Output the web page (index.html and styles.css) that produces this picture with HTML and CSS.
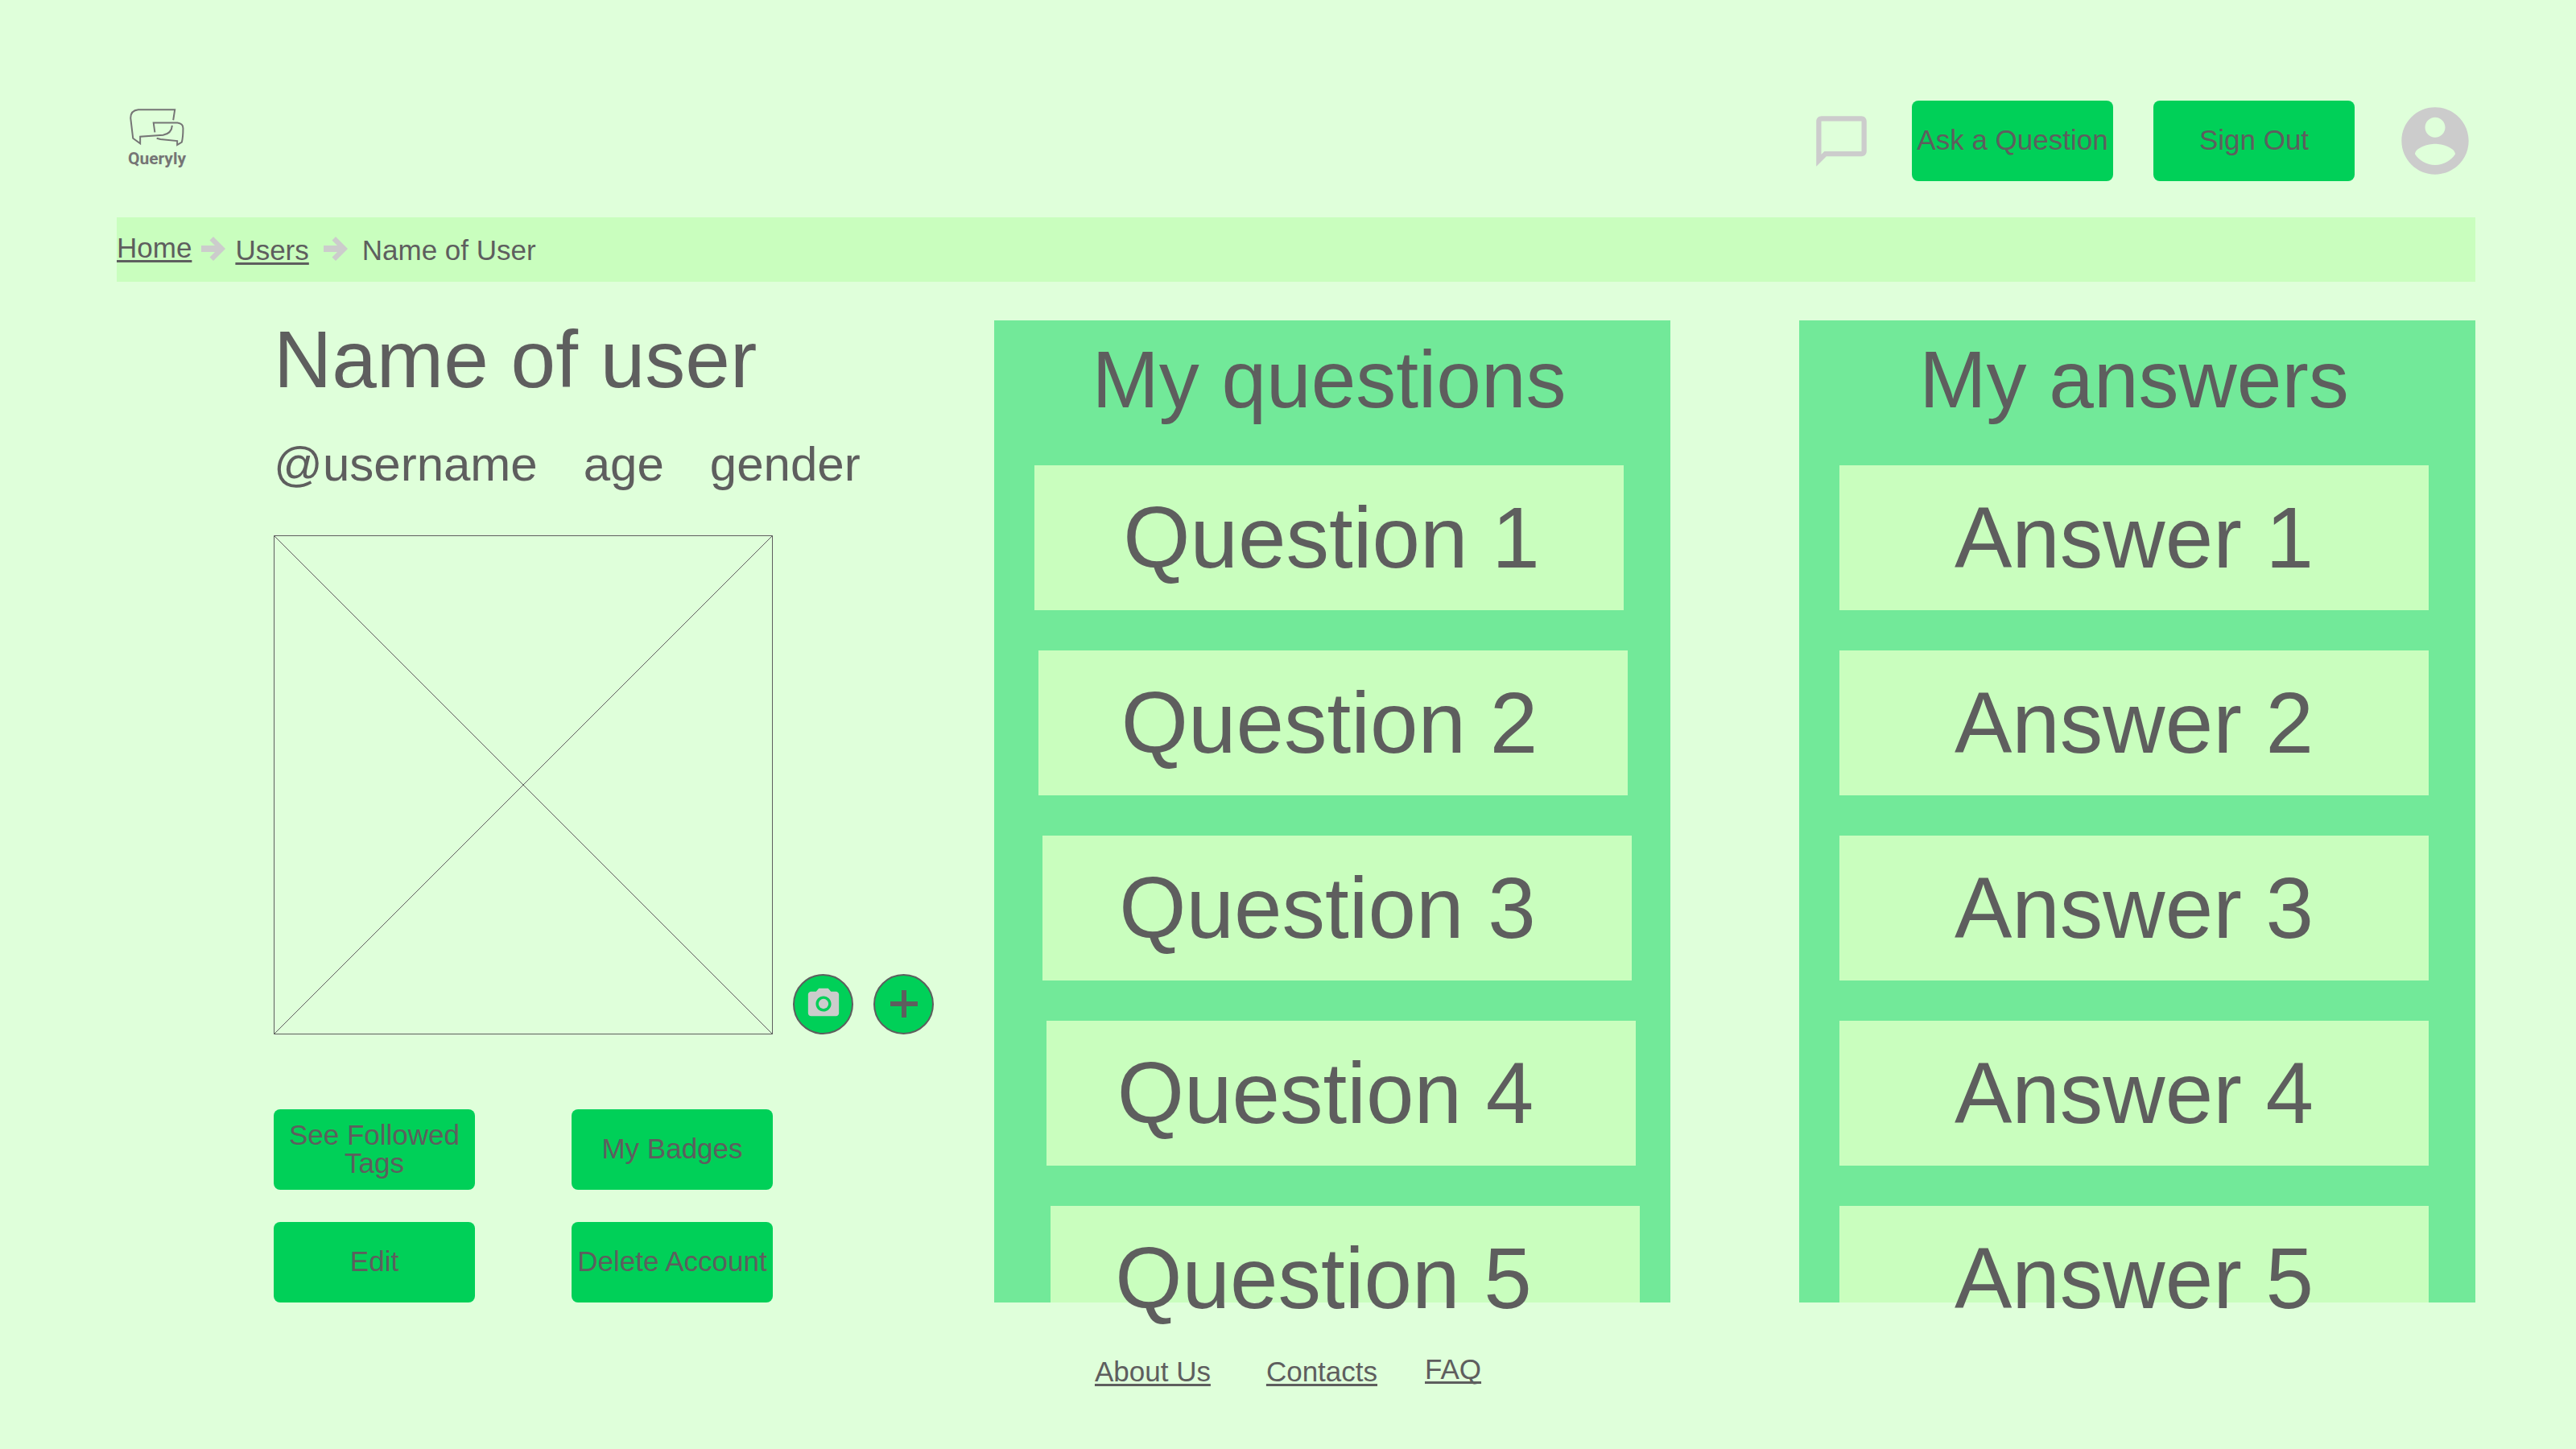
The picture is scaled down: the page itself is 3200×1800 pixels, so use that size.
FILE: index.html
```html
<!DOCTYPE html>
<html lang="en">
<head>
<meta charset="utf-8">
<title>Queryly - Name of User</title>
<link rel="stylesheet" href="styles.css">
</head>
<body>
<div class="page">
  <header class="header">
    <a class="logo" href="#">
      <svg class="logo-mark" viewBox="90 70 210 145" aria-hidden="true">
        <path d="M256 116 L262 77 H125 Q96 80 96 108 L105 184 L132 204 V178 L218 172 Q250 166 252 136"/>
        <path d="M187 162 L182 126 H272 Q293 129 293 146 Q293 180 288 199 L271 209 V194 L208 188 L194 184"/>
      </svg>
      <span class="logo-name">Queryly</span>
    </a>
    <nav class="actions">
      <a class="chat" href="#" aria-label="Messages">
        <svg viewBox="0 0 24 24" aria-hidden="true"><path d="M20 2H4c-1.1 0-2 .9-2 2v18l4-4h14c1.1 0 2-.9 2-2V4c0-1.1-.9-2-2-2zm0 14H5.200L4 17.200V4h16v12z"/></svg>
      </a>
      <button class="btn" type="button">Ask a Question</button>
      <button class="btn" type="button">Sign Out</button>
      <a class="account" href="#" aria-label="Account">
        <svg viewBox="0 0 24 24" aria-hidden="true"><path d="M12 2C6.480 2 2 6.480 2 12s4.480 10 10 10 10-4.480 10-10S17.520 2 12 2zm0 3c1.660 0 3 1.340 3 3s-1.340 3-3 3-3-1.340-3-3 1.340-3 3-3zm0 14.200c-2.500 0-4.710-1.280-6-3.220.030-1.990 4-3.080 6-3.080 1.990 0 5.970 1.090 6 3.080-1.290 1.940-3.500 3.220-6 3.220z"/></svg>
      </a>
    </nav>
  </header>

  <nav class="breadcrumb" aria-label="Breadcrumb">
    <div class="trail">
      <a class="crumb crumb-home" href="#">Home</a>
      <svg class="arrow" viewBox="0 0 30 30" aria-hidden="true"><path d="M0 11H17L10.500 4.500L15 0L30 15L15 30L10.500 25.500L17 19H0Z"/></svg>
      <a class="crumb" href="#">Users</a>
      <svg class="arrow arrow-wide" viewBox="0 0 30 30" aria-hidden="true"><path d="M0 11H17L10.500 4.500L15 0L30 15L15 30L10.500 25.500L17 19H0Z"/></svg>
      <span class="crumb">Name of User</span>
    </div>
  </nav>

  <main class="main">
    <section class="profile">
      <h1 class="name">Name of user</h1>
      <p class="facts"><span>@username</span><span>age</span><span>gender</span></p>
      <div class="photo-row">
        <svg class="photo" viewBox="0 0 620 620" role="img" aria-label="Profile photo"><path d="M.5 .5H619.500V619.500H.5ZL619.500 619.500M619.500 .5L.5 619.500"/></svg>
        <button class="round" type="button" aria-label="Take photo">
          <svg class="camera" viewBox="0 0 24 24" aria-hidden="true"><circle cx="12" cy="12" r="3.200"/><path d="M9 2L7.170 4H4c-1.100 0-2 .9-2 2v12c0 1.100.9 2 2 2h16c1.100 0 2-.9 2-2V6c0-1.100-.9-2-2-2h-3.170L15 2H9zm3 15c-2.760 0-5-2.240-5-5s2.240-5 5-5 5 2.240 5 5-2.240 5-5 5z"/></svg>
        </button>
        <button class="round" type="button" aria-label="Add photo">
          <svg class="plus" viewBox="0 0 34 34" aria-hidden="true"><path d="M14 0H20V14H34V20H20V34H14V20H0V14H14Z"/></svg>
        </button>
      </div>
      <div class="profile-actions">
        <button class="btn" type="button">See Followed Tags</button>
        <button class="btn" type="button">My Badges</button>
        <button class="btn" type="button">Edit</button>
        <button class="btn" type="button">Delete Account</button>
      </div>
    </section>

    <div class="panels">
      <section class="panel">
        <h2 class="panel-title">My questions</h2>
        <ul class="list list-stepped">
          <li class="item"><span class="label">Question 1</span></li>
          <li class="item"><span class="label">Question 2</span></li>
          <li class="item"><span class="label">Question 3</span></li>
          <li class="item"><span class="label">Question 4</span></li>
          <li class="item"><span class="label">Question 5</span></li>
        </ul>
      </section>
      <section class="panel">
        <h2 class="panel-title">My answers</h2>
        <ul class="list">
          <li class="item"><span class="label">Answer 1</span></li>
          <li class="item"><span class="label">Answer 2</span></li>
          <li class="item"><span class="label">Answer 3</span></li>
          <li class="item"><span class="label">Answer 4</span></li>
          <li class="item"><span class="label">Answer 5</span></li>
        </ul>
      </section>
    </div>
  </main>
</div>

<footer class="footer">
  <a class="about" href="#">About Us</a>
  <a href="#">Contacts</a>
  <a class="faq" href="#">FAQ</a>
</footer>
</body>
</html>
```
FILE: styles.css
```css
:root {
  --bg: #dfffda;
  --pale: #c9febe;
  --panel: #72e999;
  --accent: #00d058;
  --ink: #5e5e5e;
  --icon: #cccccc;
}

* {
  box-sizing: border-box;
}

body {
  margin: 0;
  background: var(--bg);
  color: var(--ink);
  font-family: Arial, "Liberation Sans", sans-serif;
  font-size: 35px;
  line-height: 35px;
}

a {
  color: inherit;
  text-decoration-thickness: 3px;
  text-underline-offset: 3px;
  text-decoration-skip-ink: none;
}

h1, h2, p, ul {
  margin: 0;
  padding: 0;
  font-weight: normal;
}

svg {
  display: block;
  flex: none;
}

.page {
  padding: 125px 125px 0 145px;
}

.header {
  display: flex;
  justify-content: space-between;
  margin-bottom: 45px;
}

.logo {
  display: flex;
  flex-direction: column;
  align-items: center;
  width: 100px;
  padding-top: 9px;
  color: #757575;
  text-decoration: none;
}

.logo-mark {
  width: 70px;
  height: 48px;
  fill: none;
  stroke: currentColor;
  stroke-width: 6;
}

.logo-name {
  font: 700 21px/30px Roboto, sans-serif;
}

.actions {
  display: flex;
  align-items: center;
  gap: 50px;
}

.chat svg {
  width: 75px;
  height: 75px;
  fill: var(--icon);
}

.account svg {
  width: 100px;
  height: 100px;
  fill: var(--icon);
}

.btn {
  width: 250px;
  height: 100px;
  padding: 0 0 3px;
  border: 0;
  border-radius: 8px;
  background: var(--accent);
  color: var(--ink);
  font: inherit;
}

.breadcrumb {
  padding: 20px 0;
  background: var(--pale);
}

.trail {
  display: flex;
  align-items: center;
  height: 38px;
  margin-bottom: 2px;
}

.crumb {
  align-self: flex-end;
}

.crumb-home {
  align-self: flex-start;
}

.arrow {
  width: 30px;
  height: 30px;
  margin: 0 12px;
  fill: var(--icon);
}

.arrow-wide {
  margin: 0 18px;
}

.main {
  display: grid;
  grid-template-columns: 109fr 184fr;
  margin-top: 48px;
}

.profile {
  padding-left: 195px;
}

.name {
  margin-bottom: 53px;
  font-size: 100px;
  line-height: 96px;
}

.facts {
  display: flex;
  gap: 57px;
  margin-bottom: 58px;
  font-size: 60px;
  line-height: 60px;
}

.photo-row {
  display: flex;
  align-items: flex-end;
  gap: 25px;
  margin-bottom: 93px;
}

.photo {
  width: 620px;
  height: 620px;
  fill: none;
  stroke: var(--ink);
  stroke-width: 1;
}

.round {
  display: grid;
  place-items: center;
  width: 75px;
  height: 75px;
  padding: 0 0 2px;
  border: 2px solid var(--ink);
  border-radius: 50%;
  background: var(--accent);
}

.camera {
  width: 46px;
  height: 46px;
  fill: var(--icon);
}

.plus {
  width: 34px;
  height: 34px;
  fill: var(--ink);
}

.profile-actions {
  display: grid;
  grid-template-columns: 250px 250px;
  gap: 40px 120px;
}

.panels {
  display: grid;
  grid-template-columns: 1fr 1fr;
  gap: 160px;
}

.panel {
  padding: 23px 58px 0 50px;
  background: var(--panel);
}

.panel-title {
  margin-bottom: 57px;
  font-size: 100px;
  line-height: 100px;
  text-align: center;
}

.list {
  display: flex;
  flex-direction: column;
  gap: 50px;
  list-style: none;
}

.item {
  height: 180px;
  background: var(--pale);
  font-size: 107px;
  line-height: 180px;
  text-align: center;
}

/* The last entry is cut at the panel's lower edge; its label runs over it. */
.item:last-child {
  height: 120px;
}

.label {
  display: block;
}

/* Each question card steps to the right of the one above. */
.list-stepped .item {
  --step: 0;
  margin: 0 calc(var(--step) * -5px) 0 calc(var(--step) * 5px);
}

.list-stepped .label {
  margin: 0 calc(var(--step) * 15px) 0 6px;
}

.list-stepped .item:nth-child(2) { --step: 1; }
.list-stepped .item:nth-child(3) { --step: 2; }
.list-stepped .item:nth-child(4) { --step: 3; }
.list-stepped .item:nth-child(5) { --step: 4; }

.footer {
  display: flex;
  justify-content: center;
  align-items: flex-end;
  gap: 59px;
  height: 38px;
  margin: 65px 0 79px;
}

.about {
  margin-right: 10px;
}

.faq {
  align-self: flex-start;
}
```
